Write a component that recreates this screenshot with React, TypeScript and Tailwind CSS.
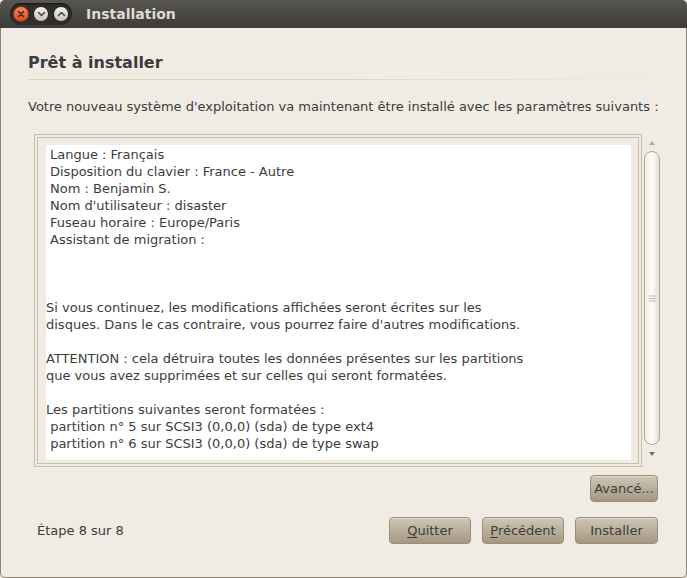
const font = { fontFamily: '"DejaVu Sans", "Liberation Sans", sans-serif' }

const summary = [
  'Langue : Français',
  'Disposition du clavier : France - Autre',
  'Nom : Benjamin S.',
  "Nom d'utilisateur : disaster",
  'Fuseau horaire : Europe/Paris',
  'Assistant de migration :',
]

const TitleButton = ({ kind }: { kind: 'close' | 'min' | 'max' }) => {
  if (kind === 'close') {
    return (
      <div className="w-[16px] h-[16px] rounded-full bg-gradient-to-b from-[#f58a5e] to-[#dd4814] border border-[#8c3a17] flex items-center justify-center">
        <svg width="8" height="8" viewBox="0 0 8 8">
          <path d="M1.5 1.5 L6.5 6.5 M6.5 1.5 L1.5 6.5" stroke="#3a2a22" strokeWidth="1.6" strokeLinecap="round" />
        </svg>
      </div>
    )
  }
  return (
    <div className="w-[16px] h-[16px] rounded-full bg-gradient-to-b from-[#f4f2ee] to-[#c6c2ba] border border-[#2e2d2a] flex items-center justify-center">
      <svg width="9" height="8" viewBox="0 0 9 8">
        <path
          d={kind === 'min' ? 'M1.5 2.5 L4.5 5.5 L7.5 2.5' : 'M1.5 5.5 L4.5 2.5 L7.5 5.5'}
          stroke="#4a4844"
          strokeWidth="1.6"
          fill="none"
          strokeLinecap="round"
          strokeLinejoin="round"
        />
      </svg>
    </div>
  )
}

const GtkButton = ({ children, className }: { children: React.ReactNode; className?: string }) => (
  <button
    className={`h-[27px] rounded-[4px] border border-[#9a8e7b] bg-gradient-to-b from-[#cfc6b6] to-[#a59883] text-[13px] text-[#3c3c3c] shadow-[inset_0_1px_0_rgba(255,255,255,0.35)] ${className ?? ''}`}
  >
    {children}
  </button>
)

export default function App() {
  return (
    <div style={font} className="w-[687px] h-[578px] flex flex-col bg-[#f0ebe3] text-[#3c3c3c] overflow-hidden">
      {/* title bar */}
      <div className="h-[28px] shrink-0 flex items-center bg-gradient-to-b from-[#575651] to-[#3c3b37] rounded-t-[5px]">
        <div className="ml-[10px] h-[22px] px-[3px] rounded-full bg-[#2f2e2b] flex items-center gap-[4px] shadow-[inset_0_1px_2px_rgba(0,0,0,0.6)]">
          <TitleButton kind="close" />
          <TitleButton kind="min" />
          <TitleButton kind="max" />
        </div>
        <span className="ml-[14px] text-[14px] font-bold text-[#dfdbd2]">Installation</span>
      </div>

      {/* body */}
      <div className="flex-1 flex flex-col border-x border-b border-[#8f826e] rounded-b-[5px] px-[26px]">
        <h1 className="mt-[25px] text-[16px] font-bold text-[#3c3c3c] leading-[20px] pl-[1px]">Prêt à installer</h1>
        <div className="mt-[6px] h-px w-[634px] bg-gradient-to-r from-[#ddd5c5] via-[#ddd5c5] to-transparent" />

        <p className="mt-[18px] text-[13px] leading-[17px] pl-[1px]">
          Votre nouveau système d'exploitation va maintenant être installé avec les paramètres suivants :
        </p>

        <div className="mt-[19px] ml-[7px] flex">
          <div className="w-[608px] h-[333px] border border-[#c8bea9] p-[2px]">
            <div className="h-full border border-[#c8bea9] px-[8px] pt-[7px] pb-[3px]">
              <div className="bg-white h-full w-[585px] pt-[1px] text-[13px] leading-[17px]">
                <div className="pl-[4px]">
                  {summary.map((line) => (
                    <div key={line}>{line}</div>
                  ))}
                </div>
                <div className="mt-[51px] whitespace-pre">
                  <div>Si vous continuez, les modifications affichées seront écrites sur les</div>
                  <div>disques. Dans le cas contraire, vous pourrez faire d'autres modifications.</div>
                  <div className="mt-[17px]">ATTENTION : cela détruira toutes les données présentes sur les partitions</div>
                  <div>que vous avez supprimées et sur celles qui seront formatées.</div>
                  <div className="mt-[17px]">Les partitions suivantes seront formatées :</div>
                  <div>{' partition n° 5 sur SCSI3 (0,0,0) (sda) de type ext4'}</div>
                  <div>{' partition n° 6 sur SCSI3 (0,0,0) (sda) de type swap'}</div>
                </div>
              </div>
            </div>
          </div>

          {/* scrollbar */}
          <div className="ml-[2px] w-[16px] flex flex-col items-center">
            <svg width="8" height="6" viewBox="0 0 8 6" className="mt-[6px]">
              <path d="M4 1 L7 5 L1 5 Z" fill="#b2a996" />
            </svg>
            <div className="mt-[5px] w-[16px] h-[294px] rounded-[8px] border border-[#b3a88f] bg-gradient-to-r from-[#f2eee8] via-[#fdfcfb] to-[#e6e0d5] flex items-center justify-center">
              <svg width="7" height="7" viewBox="0 0 7 7">
                <path d="M0 1 H7 M0 3.5 H7 M0 6 H7" stroke="#c2b8a4" strokeWidth="1" />
              </svg>
            </div>
            <svg width="8" height="6" viewBox="0 0 8 6" className="mt-[6px]">
              <path d="M1 1 L7 1 L4 5 Z" fill="#756d60" />
            </svg>
          </div>
        </div>

        <div className="mt-[8px] flex justify-end pr-[2px]">
          <GtkButton className="w-[68px]">Avancé...</GtkButton>
        </div>

        <div className="mt-[15px] flex items-center pl-[10px] pr-[2px]">
          <span className="text-[13px]">Étape 8 sur 8</span>
          <div className="ml-auto flex gap-[11px]">
            <GtkButton className="w-[82px]">
              <span className="underline underline-offset-2">Q</span>uitter
            </GtkButton>
            <GtkButton className="w-[82px]">
              <span className="underline underline-offset-2">P</span>récédent
            </GtkButton>
            <GtkButton className="w-[83px]">Installer</GtkButton>
          </div>
        </div>
      </div>
    </div>
  )
}
